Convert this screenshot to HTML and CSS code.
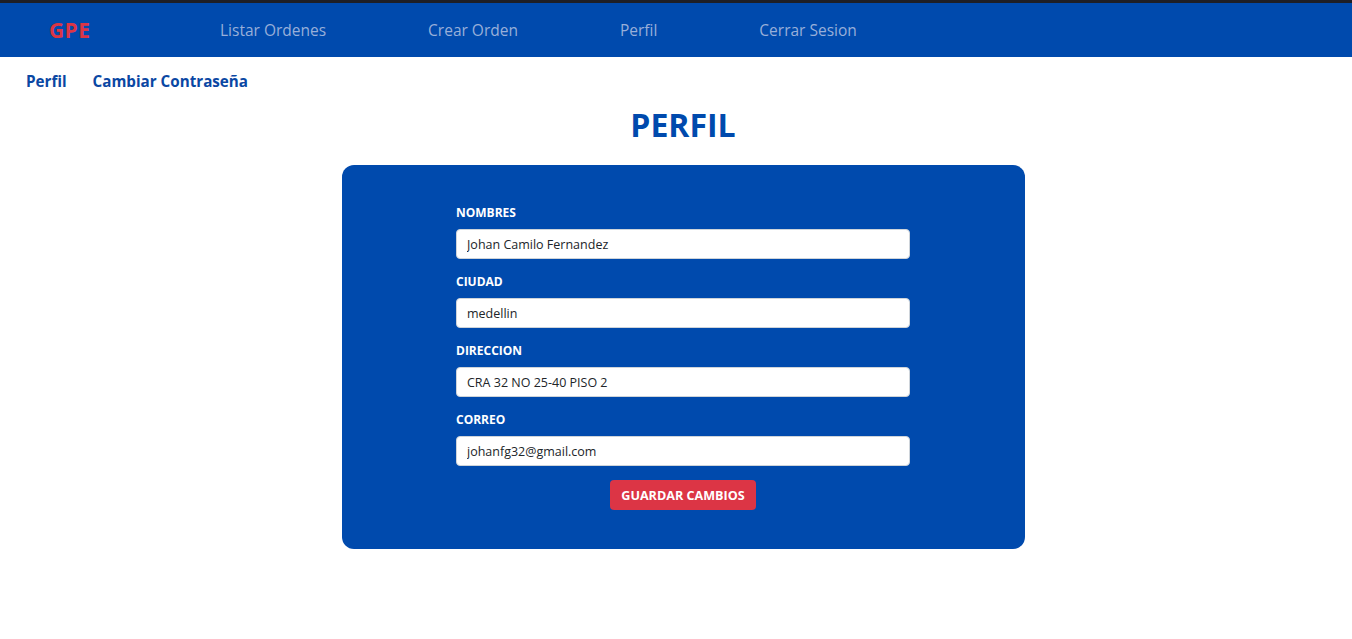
FILE: index.html
```html
<!DOCTYPE html>
<html lang="es">
<head>
<meta charset="utf-8">
<title>GPE - Perfil</title>
<link rel="stylesheet" href="styles.css">
</head>
<body>
<div class="topstrip"></div>
<nav class="navbar">
  <a class="brand" href="#">GPE</a>
  <ul class="nav-links">
    <li><a href="#">Listar Ordenes</a></li>
    <li><a href="#">Crear Orden</a></li>
    <li><a href="#">Perfil</a></li>
    <li><a href="#">Cerrar Sesion</a></li>
  </ul>
</nav>
<div class="page">
  <div class="subnav">
    <a href="#">Perfil</a>
    <a href="#">Cambiar Contraseña</a>
  </div>
  <h1 class="title">PERFIL</h1>
  <div class="card">
    <form class="form">
      <label class="label" for="nombres">NOMBRES</label>
      <input class="input" id="nombres" type="text" value="Johan Camilo Fernandez">
      <label class="label" for="ciudad">CIUDAD</label>
      <input class="input" id="ciudad" type="text" value="medellin">
      <label class="label" for="direccion">DIRECCION</label>
      <input class="input" id="direccion" type="text" value="CRA 32 NO 25-40 PISO 2">
      <label class="label" for="correo">CORREO</label>
      <input class="input" id="correo" type="text" value="johanfg32@gmail.com">
      <button class="btn" type="button">GUARDAR CAMBIOS</button>
    </form>
  </div>
</div>
</body>
</html>
```

FILE: styles.css
```css
* { box-sizing: border-box; }
html, body { overflow-x: hidden; }
body {
  margin: 0;
  font-family: "Open Sans", "Noto Sans", sans-serif;
  background: #ffffff;
}
a { text-decoration: none; }

.topstrip {
  height: 3px;
  background: #1e1f26;
}

.navbar {
  height: 54px;
  background: #004aad;
  display: flex;
  align-items: center;
  padding-left: 49px;
}
.brand {
  color: #dc3545;
  font-weight: 700;
  font-size: 21px;
  letter-spacing: 0.4px;
  width: 171px;
}
.nav-links {
  list-style: none;
  margin: 0;
  padding: 0;
  display: flex;
  gap: 102px;
}
.nav-links a {
  color: #98afd9;
  font-size: 15.5px;
}

.page {
  width: 1366px;
}
.subnav {
  display: flex;
  gap: 26px;
  padding: 14px 0 0 26px;
  height: 42px;
}
.subnav a {
  color: #0a47a3;
  font-weight: 700;
  font-size: 15.2px;
}
.title {
  margin: 3px 0 0;
  text-align: center;
  color: #004aad;
  font-size: 32px;
  font-weight: 700;
  line-height: 46px;
}
.card {
  width: 683px;
  margin: 17px auto 0;
  background: #004aad;
  border-radius: 12px;
  padding: 40px 0 39px;
}
.form {
  width: 454px;
  margin: 0 auto;
  display: flex;
  flex-direction: column;
}
.label {
  color: #ffffff;
  font-size: 12px;
  font-weight: 700;
  line-height: 16px;
  margin-bottom: 8px;
}
.input {
  height: 30px;
  border: 1px solid #ced4da;
  border-radius: 4px;
  padding: 0 10px;
  font-family: inherit;
  font-size: 12.5px;
  color: #212529;
  margin-bottom: 15px;
}
.input:last-of-type { margin-bottom: 14px; }
.btn {
  align-self: center;
  width: 146px;
  height: 30px;
  border: none;
  border-radius: 4px;
  background: #dc3545;
  color: #ffffff;
  font-family: inherit;
  font-weight: 700;
  font-size: 12.6px;
}
```
